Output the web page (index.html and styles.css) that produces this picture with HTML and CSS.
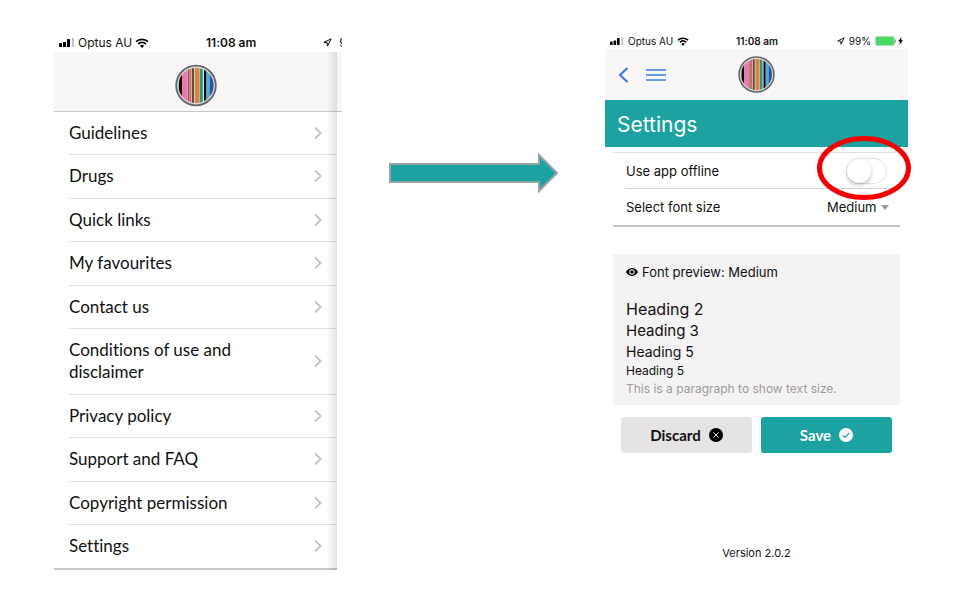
FILE: index.html
```html
<!DOCTYPE html>
<html lang="en">
<head>
<meta charset="utf-8">
<title>App settings</title>
<link rel="stylesheet" href="styles.css">
</head>
<body>
<svg width="0" height="0" class="defs" aria-hidden="true">
  <defs>
    <clipPath id="disc"><circle cx="21" cy="21" r="17.6"/></clipPath>
    <symbol id="logo" viewBox="0 0 42 42">
      <circle cx="21" cy="21" r="19.8" fill="#dcd9da" stroke="#66666a" stroke-width="1.8"/>
      <g clip-path="url(#disc)">
        <rect x="2" y="2" width="38" height="38" fill="#e2dcd8"/>
        <rect x="2" y="2" width="2" height="38" fill="#6fae9a"/>
        <rect x="4" y="2" width="3" height="38" fill="#0b0b0b"/>
        <rect x="7" y="2" width="5.6" height="38" fill="#f075ab"/>
        <rect x="13" y="2" width="1.4" height="38" fill="#6c5a5c"/>
        <rect x="14.8" y="2" width="1.6" height="38" fill="#e85f50"/>
        <rect x="17" y="2" width="2" height="38" fill="#4a5450"/>
        <rect x="19.8" y="2" width="4.2" height="38" fill="#f27a35"/>
        <rect x="24.6" y="2" width="3.2" height="38" fill="#259b7c"/>
        <rect x="29" y="2" width="2.4" height="38" fill="#080c10"/>
        <rect x="31.8" y="2" width="3" height="38" fill="#4dabe0"/>
        <rect x="34.8" y="2" width="4.2" height="38" fill="#24569c"/>
      </g>
    </symbol>
    <symbol id="signal" viewBox="0 0 16 9">
      <rect x="0" y="5" width="3" height="4" rx=".6"/>
      <rect x="4" y="4" width="3" height="5" rx=".6"/>
      <rect x="8" y="1" width="3" height="8" rx=".6"/>
      <rect x="13" y="0" width="2" height="9" rx=".6" fill="#c4c4c4"/>
    </symbol>
    <symbol id="wifi" viewBox="0 0 14 10">
      <path d="M1 3.600C4.400.5 9.600.5 13 3.600M3.200 6C5.400 4 8.600 4 10.800 6" fill="none" stroke="#000" stroke-width="1.800"/>
      <path d="M4.900 7.700a3.200 3.200 0 0 1 4.200 0L7 9.900z"/>
    </symbol>
    <symbol id="locate" viewBox="0 0 10 10">
      <path d="M9 1 1 4.900l3.700.4L5 9z" fill="none" stroke="#000" stroke-width="1.100" stroke-linejoin="round"/>
    </symbol>
    <symbol id="chevron" viewBox="0 0 8 14">
      <path d="m1 1.500 5.700 5.500L1 12.500" fill="none" stroke="#c4c4c6" stroke-width="1.900"/>
    </symbol>
  </defs>
</svg>

<main class="board">
  <section class="phone menu" aria-label="Menu">
    <div class="status">
      <span class="carrier"><svg class="signal"><use href="#signal"/></svg>Optus AU<svg class="wifi"><use href="#wifi"/></svg></span>
      <span class="clock">11:08 am</span>
      <span class="power"><svg class="locate"><use href="#locate"/></svg><span>99%</span></span>
    </div>
    <div class="drawer">
      <header class="bar"><svg class="logo" role="img" aria-label="Logo"><use href="#logo"/></svg></header>
      <nav class="links">
        <a href="#"><span>Guidelines</span><svg><use href="#chevron"/></svg></a>
        <a href="#"><span>Drugs</span><svg><use href="#chevron"/></svg></a>
        <a href="#"><span>Quick links</span><svg><use href="#chevron"/></svg></a>
        <a href="#"><span>My favourites</span><svg><use href="#chevron"/></svg></a>
        <a href="#"><span>Contact us</span><svg><use href="#chevron"/></svg></a>
        <a href="#"><span>Conditions of use and disclaimer</span><svg><use href="#chevron"/></svg></a>
        <a href="#"><span>Privacy policy</span><svg><use href="#chevron"/></svg></a>
        <a href="#"><span>Support and FAQ</span><svg><use href="#chevron"/></svg></a>
        <a href="#"><span>Copyright permission</span><svg><use href="#chevron"/></svg></a>
        <a href="#"><span>Settings</span><svg><use href="#chevron"/></svg></a>
      </nav>
    </div>
  </section>

  <svg class="arrow" viewBox="0 0 169 40" aria-hidden="true">
    <path d="M1 11h149V2l18 18-18 18v-9H1z" fill="#1ca2a0" stroke="#98a3a6" stroke-width="2"/>
  </svg>

  <section class="phone settings" aria-label="Settings">
    <div class="status">
      <span class="carrier"><svg class="signal"><use href="#signal"/></svg>Optus AU<svg class="wifi"><use href="#wifi"/></svg></span>
      <span class="clock">11:08 am</span>
      <span class="power"><svg class="locate"><use href="#locate"/></svg><span>99%</span>
        <svg class="battery" viewBox="0 0 29 10">
          <rect x=".5" y=".5" width="19" height="9" rx="2" fill="#4cd964" stroke="#a9dcb1"/>
          <path d="M20.500 3.500v3" stroke="#999"/>
          <path d="m26.500 1-3.500 4.600h2L24.400 9l3.600-4.800h-2z"/>
        </svg></span>
    </div>
    <header class="bar">
      <div class="tools">
        <button type="button" aria-label="Back"><svg class="back" viewBox="0 0 11 16"><path d="M9.500 1 2 8l7.500 7" fill="none" stroke="#3f7be0" stroke-width="2.200"/></svg></button>
        <button type="button" aria-label="Menu"><svg class="burger" viewBox="0 0 20 12"><path d="M0 1h20M0 6h20M0 11h20" stroke="#3f7be0" stroke-width="1.500"/></svg></button>
      </div>
      <svg class="logo" role="img" aria-label="Logo"><use href="#logo"/></svg>
    </header>
    <h1>Settings</h1>
    <form class="form">
      <div class="options">
        <div class="option">
          <label for="offline">Use app offline</label>
          <input type="checkbox" id="offline" class="toggle">
          <svg class="ring" viewBox="0 0 94 64" aria-hidden="true"><ellipse cx="47" cy="32" rx="44.500" ry="29.500" fill="none" stroke="#f40000" stroke-width="5"/></svg>
        </div>
        <div class="option">
          <label for="size">Select font size</label>
          <span class="pick">
            <select id="size"><option>Medium</option></select>
            <svg viewBox="0 0 8 5" aria-hidden="true"><path d="M0 0h8L4 5z" fill="#999"/></svg>
          </span>
        </div>
      </div>
      <div class="preview">
        <p class="caption"><svg viewBox="0 0 12 8" aria-hidden="true"><path d="M0 4C3-1.300 9-1.300 12 4 9 9.300 3 9.300 0 4z"/><circle cx="6" cy="4" r="2.700" fill="#f4f2f3"/><circle cx="6" cy="4" r="1.700"/></svg>Font preview: Medium</p>
        <div class="sample">
          <h2>Heading 2</h2>
          <h3>Heading 3</h3>
          <h4>Heading 5</h4>
          <h5>Heading 5</h5>
          <p>This is a paragraph to show text size.</p>
        </div>
      </div>
      <div class="actions">
        <button type="button" class="discard">Discard<svg viewBox="0 0 14 14" aria-hidden="true"><circle cx="7" cy="7" r="7"/><path d="m4.300 4.300 5.400 5.400m0-5.400L4.300 9.700" stroke="#ddd" fill="none"/></svg></button>
        <button type="button" class="save">Save<svg viewBox="0 0 14 14" aria-hidden="true"><circle cx="7" cy="7" r="7" fill="#fff"/><path d="m3.800 7.300 2.200 2.100 4.200-4.400" stroke="#1ca2a0" stroke-width="1.200" fill="none"/></svg></button>
      </div>
    </form>
    <p class="version">Version 2.0.2</p>
  </section>
</main>
</body>
</html>
```
FILE: styles.css
```css
* { box-sizing: border-box; }
body {
  margin: 0;
  background: #fff;
  color: #111;
  font-family: Inter, "Liberation Sans", sans-serif;
  font-size: 13px;
  font-variant-ligatures: none;
}
h1, h2, h3, h4, h5, p { margin: 0; font-weight: 400; }
button, select { font: inherit; color: inherit; border: 0; background: none; padding: 0; }
svg { display: block; flex: none; }
.defs { position: absolute; }

.board {
  display: grid;
  grid-template-columns: 288fr 169fr 303fr;
  gap: 47px;
  align-items: start;
  padding: 33px 51px 0 54px;
}

.status {
  display: grid;
  grid-template-columns: 1fr auto 1fr;
  align-items: center;
  height: 16px;
  padding: 0 4px 0 5px;
  font-size: 10px;
  white-space: nowrap;
}
.carrier, .power { display: flex; align-items: center; gap: 3px; }
.power { justify-content: flex-end; }
.clock { font-weight: 600; }
.signal { width: 14px; height: 8px; }
.wifi { width: 12px; height: 9px; }
.locate { width: 8px; height: 8px; }
.battery { width: 29px; height: 10px; }
.settings .carrier, .settings .power { gap: 4px; }

.menu { overflow: hidden; }
.menu .status {
  height: 19px;
  grid-template-columns: 147px 1fr auto;
  margin-right: -28px;
  font-size: 12px;
}
.menu .power { gap: 7px; }
.menu .signal { width: 16px; height: 9px; }
.menu .wifi { width: 14px; height: 10px; }
.menu .locate { width: 9px; height: 9px; }

.bar { background: #f8f6f7; }
.drawer { position: relative; }
.drawer::after {
  content: "";
  position: absolute;
  top: 0;
  right: 5px;
  bottom: 0;
  width: 10px;
  background: linear-gradient(to right, rgba(0,0,0,0), rgba(0,0,0,.11));
}
.menu .bar {
  display: flex;
  justify-content: center;
  padding: 12px 5px 4px 0;
  border-bottom: 1px solid #c8c7c9;
}
.menu .logo { width: 42px; height: 43px; }
.links {
  margin-right: 5px;
  border-bottom: 2px solid #c6c6c8;
}
.links a {
  display: flex;
  align-items: center;
  justify-content: space-between;
  margin-left: 15px;
  padding: 10px 15px 10px 0;
  border-bottom: 1px solid #e0e0e1;
  color: #111;
  font-family: Lato, "Liberation Sans", sans-serif;
  font-size: 17px;
  line-height: 22px;
  text-decoration: none;
}
.links a:nth-child(even) { padding-bottom: 11px; }
.links a:last-child { border-bottom: 0; }
.links span { max-width: 190px; }
.links svg { width: 8px; height: 14px; }

.arrow { width: 100%; margin-top: 120px; }

.settings .bar {
  display: grid;
  grid-template-columns: 1fr auto 1fr;
  align-items: center;
  height: 51px;
}
.settings .logo { width: 37px; height: 37px; }
.tools { display: flex; align-items: center; gap: 17px; padding-left: 13px; }
.back { width: 11px; height: 16px; }
.burger { width: 20px; height: 12px; }
h1 {
  padding: 11px 12px 8px;
  background: #1ca2a0;
  color: #fff;
  font-size: 21px;
  line-height: 28px;
}
.form { padding: 5px 8px 0; }
.options {
  border-top: 1px solid #eadedd;
  border-bottom: 2px solid #c3c3c5;
}
.option {
  position: relative;
  display: flex;
  align-items: center;
  justify-content: space-between;
  height: 36px;
  margin-left: 13px;
  padding-right: 13px;
}
.option:first-child { border-bottom: 1px solid #d0d0d2; }
.toggle {
  appearance: none;
  width: 41px;
  height: 26px;
  margin: 0;
  border: 1px solid #e2e2e4;
  border-radius: 13px;
  background: #fff;
}
.toggle::before {
  content: "";
  display: block;
  width: 24px;
  height: 24px;
  border-radius: 50%;
  background: #fff;
  box-shadow: 0 2px 4px rgba(0,0,0,.25);
}
.toggle:checked::before { margin-left: auto; }
.ring {
  position: absolute;
  top: -17px;
  right: -11px;
  width: 94px;
  height: 64px;
  pointer-events: none;
}
.pick { display: flex; align-items: center; gap: 4px; margin-right: -2px; }
.pick select { appearance: none; }
.pick svg { width: 8px; height: 5px; }

.preview { margin-top: 27px; background: #f4f2f3; }
.caption {
  display: flex;
  align-items: center;
  gap: 4px;
  height: 37px;
  padding-left: 13px;
  border-bottom: 1px solid #f0eef0;
}
.caption svg { width: 12px; height: 8px; }
.sample { padding: 7px 13px; }
h2 { font-size: 16px; line-height: 22px; }
h3 { font-size: 15px; line-height: 22px; }
h4 { font-size: 14px; line-height: 20px; }
h5 { font-size: 12px; line-height: 18px; }
.sample p { color: #9c9a9c; font-size: 12px; line-height: 18px; }

.actions {
  display: grid;
  grid-template-columns: 1fr 1fr;
  gap: 9px;
  padding: 12px 8px 0;
}
.actions button {
  display: flex;
  align-items: center;
  justify-content: center;
  gap: 8px;
  height: 36px;
  border-radius: 3px;
  font-family: Lato, "Liberation Sans", sans-serif;
  font-size: 15px;
  font-weight: 700;
}
.actions svg { width: 14px; height: 14px; }
.discard { background: #e5e3e4; }
.actions .save { background: #1ca2a0; color: #fff; }
.version { margin-top: 92px; text-align: center; font-size: 11px; line-height: 16px; }
```
